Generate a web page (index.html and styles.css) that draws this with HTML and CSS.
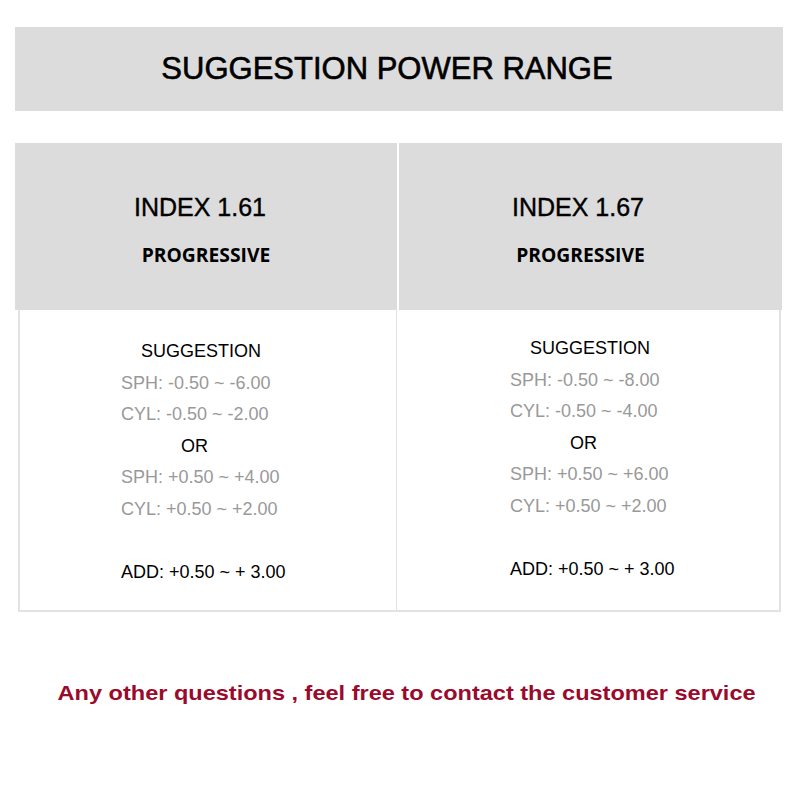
FILE: index.html
```html
<!DOCTYPE html>
<html>
<head>
<meta charset="utf-8">
<link rel="stylesheet" href="styles.css">
</head>
<body>
<div class="page">
  <div class="title-band"><h1 class="title">SUGGESTION POWER RANGE</h1></div>
  <div class="table">
    <div class="hcell hcell-a">
      <div class="index">INDEX 1.61</div>
      <div class="prog">PROGRESSIVE</div>
    </div>
    <div class="hcell hcell-b">
      <div class="index">INDEX 1.67</div>
      <div class="prog">PROGRESSIVE</div>
    </div>
    <div class="bcell bcell-a">
      <div class="line dark ind-s">SUGGESTION</div>
      <div class="line grey">SPH: -0.50 ~ -6.00</div>
      <div class="line grey">CYL: -0.50 ~ -2.00</div>
      <div class="line dark ind-or">OR</div>
      <div class="line grey">SPH: +0.50 ~ +4.00</div>
      <div class="line grey">CYL: +0.50 ~ +2.00</div>
      <div class="line blank"></div>
      <div class="line dark">ADD: +0.50 ~ + 3.00</div>
    </div>
    <div class="bcell bcell-b">
      <div class="line dark ind-s">SUGGESTION</div>
      <div class="line grey">SPH: -0.50 ~ -8.00</div>
      <div class="line grey">CYL: -0.50 ~ -4.00</div>
      <div class="line dark ind-or">OR</div>
      <div class="line grey">SPH: +0.50 ~ +6.00</div>
      <div class="line grey">CYL: +0.50 ~ +2.00</div>
      <div class="line blank"></div>
      <div class="line dark">ADD: +0.50 ~ + 3.00</div>
    </div>
  </div>
  <div class="footer"><span class="footer-text">Any other questions , feel free to contact the customer service</span></div>
</div>
</body>
</html>
```

FILE: styles.css
```css
html, body {
  margin: 0;
  padding: 0;
  background: #ffffff;
}
.page {
  width: 800px;
  height: 800px;
  padding-top: 27px;
  box-sizing: border-box;
  font-family: "Liberation Sans", Arial, sans-serif;
  color: #000;
}
.title-band {
  margin-left: 15px;
  width: 768px;
  height: 84px;
  background: #dddcdd;
  display: flex;
  align-items: center;
  justify-content: center;
  padding-right: 24px;
  box-sizing: border-box;
}
.title {
  margin: 0;
  font-size: 31px;
  font-weight: normal;
  line-height: 36px;
  -webkit-text-stroke: 0.6px #000;
}
.table {
  margin-top: 32px;
  margin-left: 15px;
  display: grid;
  grid-template-columns: 382px 385px;
}
.hcell {
  background: #dddcdd;
  height: 167px;
  padding-top: 49px;
  box-sizing: border-box;
  text-align: center;
}
.hcell-b {
  border-left: 2px solid #ffffff;
}
.index {
  font-size: 25px;
  line-height: 30px;
  -webkit-text-stroke: 0.4px #000;
}
.prog {
  margin-top: 21px;
  font-family: "Open Sans", "Noto Sans", sans-serif;
  font-weight: 700;
  font-size: 19.3px;
  line-height: 24px;
}
.hcell-a .index { margin-right: 12px; }
.hcell-b .index { margin-right: 25px; }
.hcell-b .prog { margin-right: 20px; }
.bcell {
  border-bottom: 2px solid #e2e2e2;
  border-right: 1px solid #e2e2e2;
  padding-bottom: 22px;
  font-size: 18px;
}
.bcell-a {
  margin-left: 3px;
  border-left: 2px solid #e2e2e2;
  padding-left: 101px;
  padding-top: 26px;
}
.bcell-b {
  margin-right: 1px;
  border-right: 2px solid #e2e2e2;
  padding-left: 113px;
  padding-top: 23px;
}
.line {
  line-height: 31.5px;
  height: 31.5px;
  white-space: nowrap;
}
.grey { color: #999999; }
.dark { color: #000000; }
.ind-s { padding-left: 20px; }
.ind-or { padding-left: 60px; }
.footer {
  margin-top: 68px;
  text-align: center;
  padding-left: 13px;
  line-height: 26px;
}
.footer-text {
  display: inline-block;
  color: #990a2c;
  font-weight: bold;
  font-size: 21px;
  transform: scaleX(1.12);
  transform-origin: center;
}
```
